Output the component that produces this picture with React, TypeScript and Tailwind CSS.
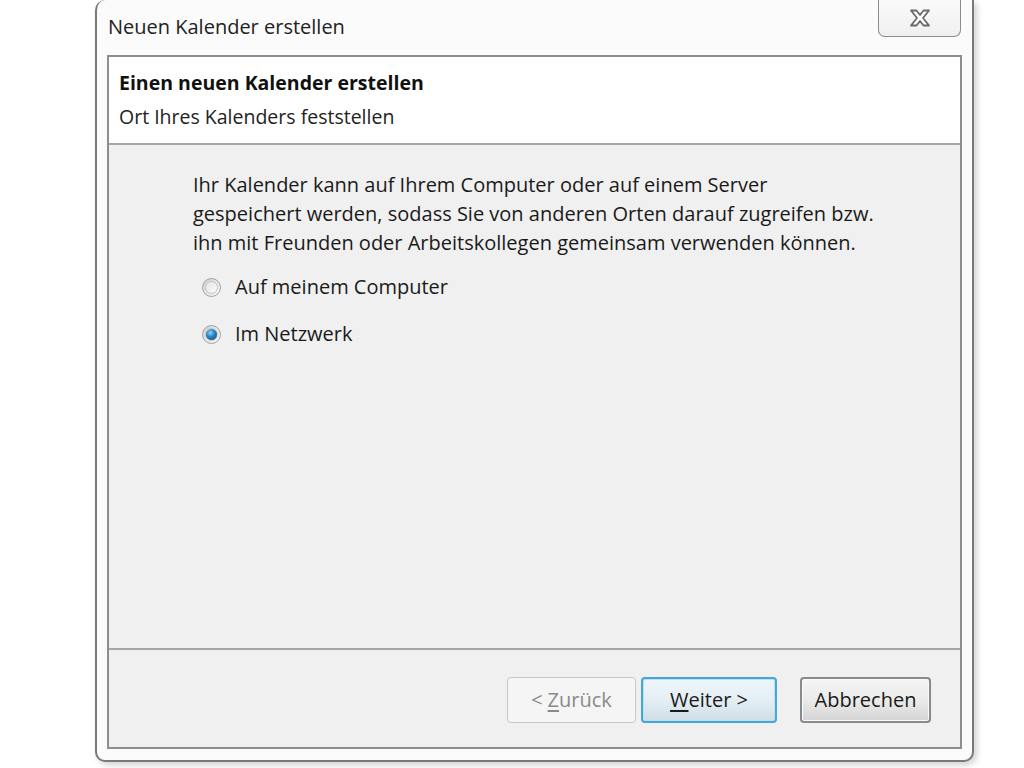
import * as React from 'react';

// --- Kleine Bausteine ---
const Radio = ({ checked }: { checked?: boolean }) => (
  <span className="relative flex h-[19px] w-[19px] shrink-0 items-center justify-center rounded-full border border-[#a2a2a2] bg-gradient-to-br from-[#d0d0d0] to-[#fbfbfb]">
    <span className="h-[13px] w-[13px] rounded-full border border-[#c4c4c4] bg-gradient-to-br from-[#e6e6e6] to-[#fafafa]" />
    {checked && (
      <span className="absolute h-[11px] w-[11px] rounded-full bg-[radial-gradient(circle_at_40%_35%,#8fd6ff_0%,#2a86c2_40%,#0d456c_100%)]" />
    )}
  </span>
);

const CloseIcon = () => (
  <svg width="24" height="20" viewBox="0 0 24 20">
    <path
      d="M3 2.5 H8.5 L12 7 L15.5 2.5 H21 L15 10 L21 17.5 H15.5 L12 13 L8.5 17.5 H3 L9 10 Z"
      fill="#fdfdfd"
      stroke="#6a6a6a"
      strokeWidth="1.8"
      strokeLinejoin="round"
    />
  </svg>
);

interface BtnProps {
  children: React.ReactNode;
  variant?: 'normal' | 'default' | 'disabled';
  width: string;
}

const Button = ({ children, variant = 'normal', width }: BtnProps) => {
  if (variant === 'disabled') {
    return (
      <div className={`${width} flex h-[46px] items-center justify-center rounded-[4px] border border-[#c5c8ca] bg-[#f5f5f5] text-[#8a8a8a]`}>
        {children}
      </div>
    );
  }
  if (variant === 'default') {
    return (
      <div className={`${width} flex h-[46px] items-center justify-center rounded-[4px] border-2 border-[#46a6d8] bg-gradient-to-b from-[#eef6fb] via-[#e4eef4] to-[#cfdde6] text-[#1a1a1a] shadow-[inset_0_0_0_1px_#b8e2f6]`}>
        {children}
      </div>
    );
  }
  return (
    <div className={`${width} flex h-[46px] items-center justify-center rounded-[4px] border-2 border-[#8a8a8a] bg-gradient-to-b from-[#f4f4f4] via-[#ebebeb] to-[#d4d4d4] text-[#1a1a1a] shadow-[inset_0_0_0_1px_#fafafa]`}>
      {children}
    </div>
  );
};

export default function App() {
  return (
    <div
      className="h-[768px] w-[1024px] overflow-hidden bg-white text-[#1a1a1a]"
      style={{ fontFamily: '"Open Sans", "Noto Sans", sans-serif' }}
    >
      {/* Fenster */}
      <div className="ml-[95px] flex h-[762px] w-[879px] flex-col rounded-b-[10px] rounded-tl-[10px] border-2 border-t-0 border-[#7a7a7a] bg-[#fbfbfb] shadow-[3px_3px_6px_rgba(0,0,0,0.18)]">
        {/* Titelleiste */}
        <div className="flex h-[55px] shrink-0 items-start justify-between pl-[11px] pr-[11px]">
          <div className="pt-[13px] text-[20px] leading-[28px] text-[#222]">Neuen Kalender erstellen</div>
          <div className="flex h-[37px] w-[83px] items-center justify-center rounded-b-[7px] border border-t-0 border-[#8c8c8c] bg-gradient-to-b from-[#fafafa] to-[#f0f0f0]">
            <CloseIcon />
          </div>
        </div>

        {/* Innerer Rahmen */}
        <div className="mx-[10px] mb-[11px] flex flex-1 flex-col border-2 border-[#8e8e8e]">
          {/* Kopfbereich */}
          <div className="flex h-[86px] shrink-0 flex-col bg-white pl-[10px] pt-[9px]">
            <div className="text-[19.5px] font-bold leading-[34px] text-[#111]">Einen neuen Kalender erstellen</div>
            <div className="text-[19.5px] leading-[34px] text-[#222]">Ort Ihres Kalenders feststellen</div>
          </div>
          <div className="h-[2px] shrink-0 bg-[#a6a6a6]" />

          {/* Inhalt */}
          <div className="flex flex-1 flex-col bg-[#f0f0f0] pl-[84px] pt-[25px]">
            <p className="text-[20px] leading-[29px]">
              Ihr Kalender kann auf Ihrem Computer oder auf einem Server
              <br />
              gespeichert werden, sodass Sie von anderen Orten darauf zugreifen bzw.
              <br />
              ihn mit Freunden oder Arbeitskollegen gemeinsam verwenden können.
            </p>
            <div className="mt-[15px] flex flex-col gap-[17px]">
              <label className="flex h-[30px] items-center gap-[14px] pl-[9px] text-[20px]">
                <Radio />
                <span>Auf meinem Computer</span>
              </label>
              <label className="flex h-[30px] items-center gap-[14px] pl-[9px] text-[20px]">
                <Radio checked />
                <span>Im Netzwerk</span>
              </label>
            </div>
          </div>

          <div className="h-[2px] shrink-0 bg-[#a6a6a6]" />

          {/* Fußbereich */}
          <div className="flex h-[97px] shrink-0 items-start justify-end bg-[#f0f0f0] pr-[29px] pt-[27px] text-[20px]">
            <Button variant="disabled" width="w-[129px]">
              &lt; <span className="ml-[5px] underline underline-offset-[3px]">Z</span>urück
            </Button>
            <div className="w-[5px]" />
            <Button variant="default" width="w-[136px]">
              <span className="underline underline-offset-[3px]">W</span>eiter &gt;
            </Button>
            <div className="w-[23px]" />
            <Button width="w-[131px]">Abbrechen</Button>
          </div>
        </div>
      </div>
    </div>
  );
}
